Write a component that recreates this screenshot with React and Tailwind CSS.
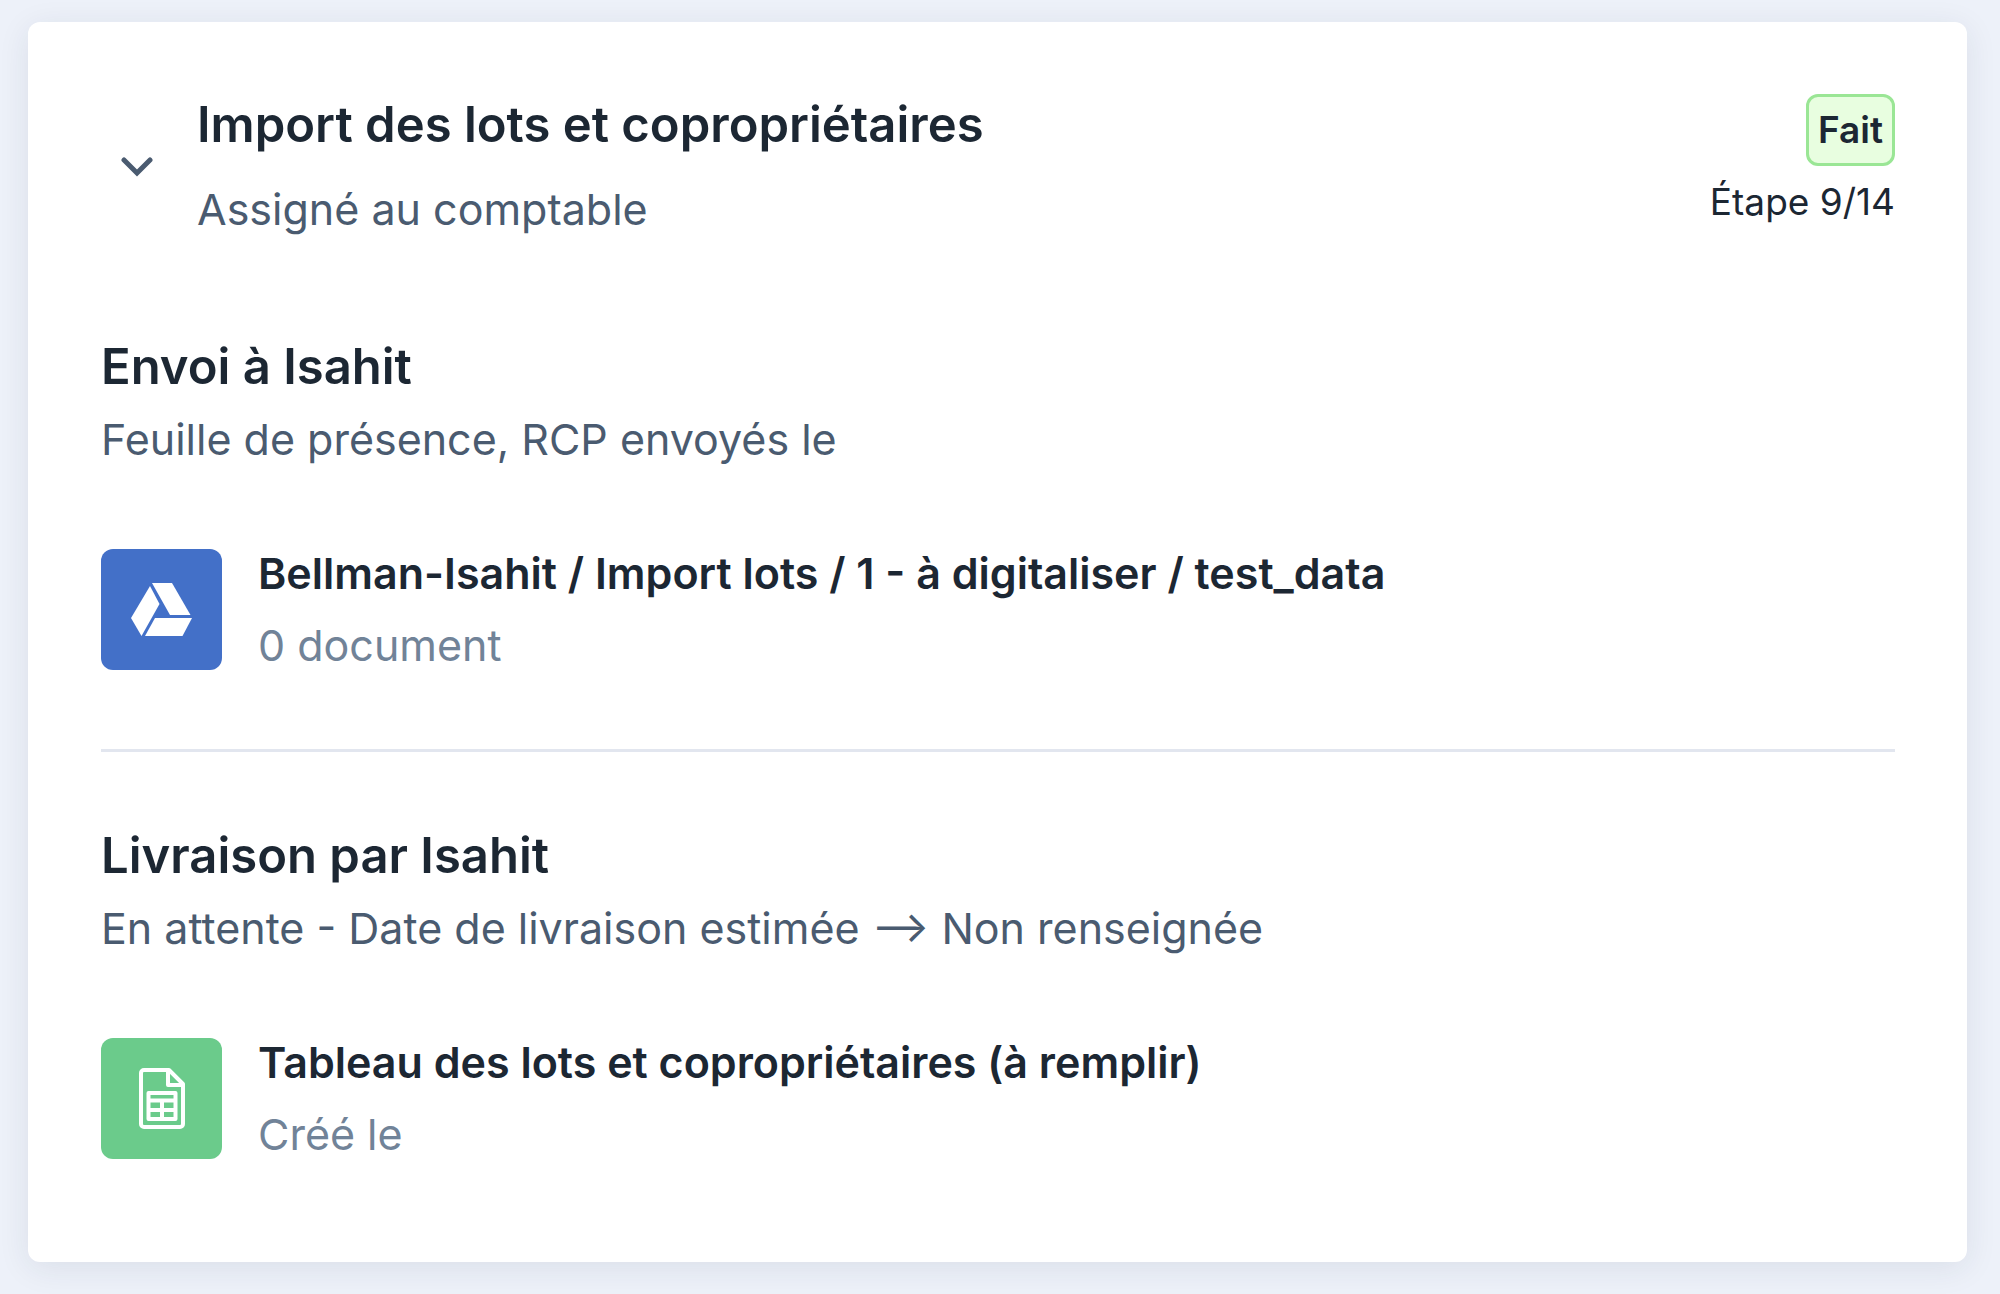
import React from 'react';

const DriveIcon = () => (
  <svg className="h-[53px] w-[61px]" viewBox="0 0 61 53" fill="white" aria-hidden="true">
    <path d="M21 0h20L59.500 32H39z" />
    <path d="M19 3l9.500 18L10.500 53 0 35z" />
    <path d="M24 35h37L51.500 53H14z" />
  </svg>
);

const SheetIcon = () => (
  <svg className="h-[61px] w-[46px]" viewBox="0 0 46 61" fill="none" stroke="white" strokeWidth="4" strokeLinejoin="round" aria-hidden="true">
    <path d="M5 2h25l14 14v40a3 3 0 0 1-3 3H5a3 3 0 0 1-3-3V5a3 3 0 0 1 3-3z" />
    <path d="M29 2v15h15" />
    <path d="M9.500 25h27v26h-27zM9.500 32.500h27M9.500 42h27M23 32.500V51" />
  </svg>
);

const Resource = ({ icon, color, title, detail }) => (
  <div className="mt-[62px] flex items-center gap-9">
    <div className={`flex size-[121px] shrink-0 items-center justify-center rounded-xl ${color}`}>
      {icon}
    </div>
    <div className="text-[43px] leading-[72px]">
      <p className="font-semibold">{title}</p>
      <p className="text-[#718398]">{detail}</p>
    </div>
  </div>
);

const Section = ({ title, subtitle, children }) => (
  <section>
    <h3 className="text-[49px] leading-[72px] font-semibold">{title}</h3>
    <p className="text-[43px] leading-[72px] text-[#4a5b70]">{subtitle}</p>
    {children}
  </section>
);

export default function App() {
  return (
    <div className="min-h-screen bg-[#edf1f9] pt-[22px] pr-[33px] pb-8 pl-7 font-['Inter',sans-serif] text-[#1c2733]">
      <article className="rounded-xl bg-white pt-[72px] pr-[72px] pb-[92px] pl-[73px] shadow-[0_6px_32px_rgba(30,40,70,0.09)]">
        <header className="flex items-start justify-between">
          <div className="flex items-center">
            <button type="button" aria-label="Replier" className="flex w-24 justify-start pl-5 text-[#4a5b70]">
              <svg className="h-5 w-8" viewBox="0 0 32 20" fill="none" stroke="currentColor" strokeWidth="5" strokeLinecap="round" aria-hidden="true">
                <path d="M3 3l13 13L29 3" />
              </svg>
            </button>
            <div>
              <h2 className="text-[49px] leading-[62px] font-semibold">Import des lots et copropriétaires</h2>
              <p className="mt-[22px] text-[43px] leading-[62px] text-[#4a5b70]">Assigné au comptable</p>
            </div>
          </div>
          <div className="flex flex-col items-end">
            <span className="rounded-xl border-3 border-[#9ae695] bg-[#e8fee0] px-[9px] text-[37px] leading-[66px] font-semibold">Fait</span>
            <span className="mt-1 text-[37px] leading-[64px]">Étape 9/14</span>
          </div>
        </header>

        <div className="mt-[91px]">
          <Section title="Envoi à Isahit" subtitle="Feuille de présence, RCP envoyés le">
            <Resource
              icon={<DriveIcon />}
              color="bg-[#4370c8]"
              title="Bellman-Isahit / Import lots / 1 - à digitaliser / test_data"
              detail="0 document"
            />
          </Section>
          <hr className="my-[68px] border-t-3 border-[#e2e6ef]" />
          <Section title="Livraison par Isahit" subtitle="En attente - Date de livraison estimée --> Non renseignée">
            <Resource
              icon={<SheetIcon />}
              color="bg-[#6bcb8b]"
              title="Tableau des lots et copropriétaires (à remplir)"
              detail="Créé le"
            />
          </Section>
        </div>
      </article>
    </div>
  );
}
